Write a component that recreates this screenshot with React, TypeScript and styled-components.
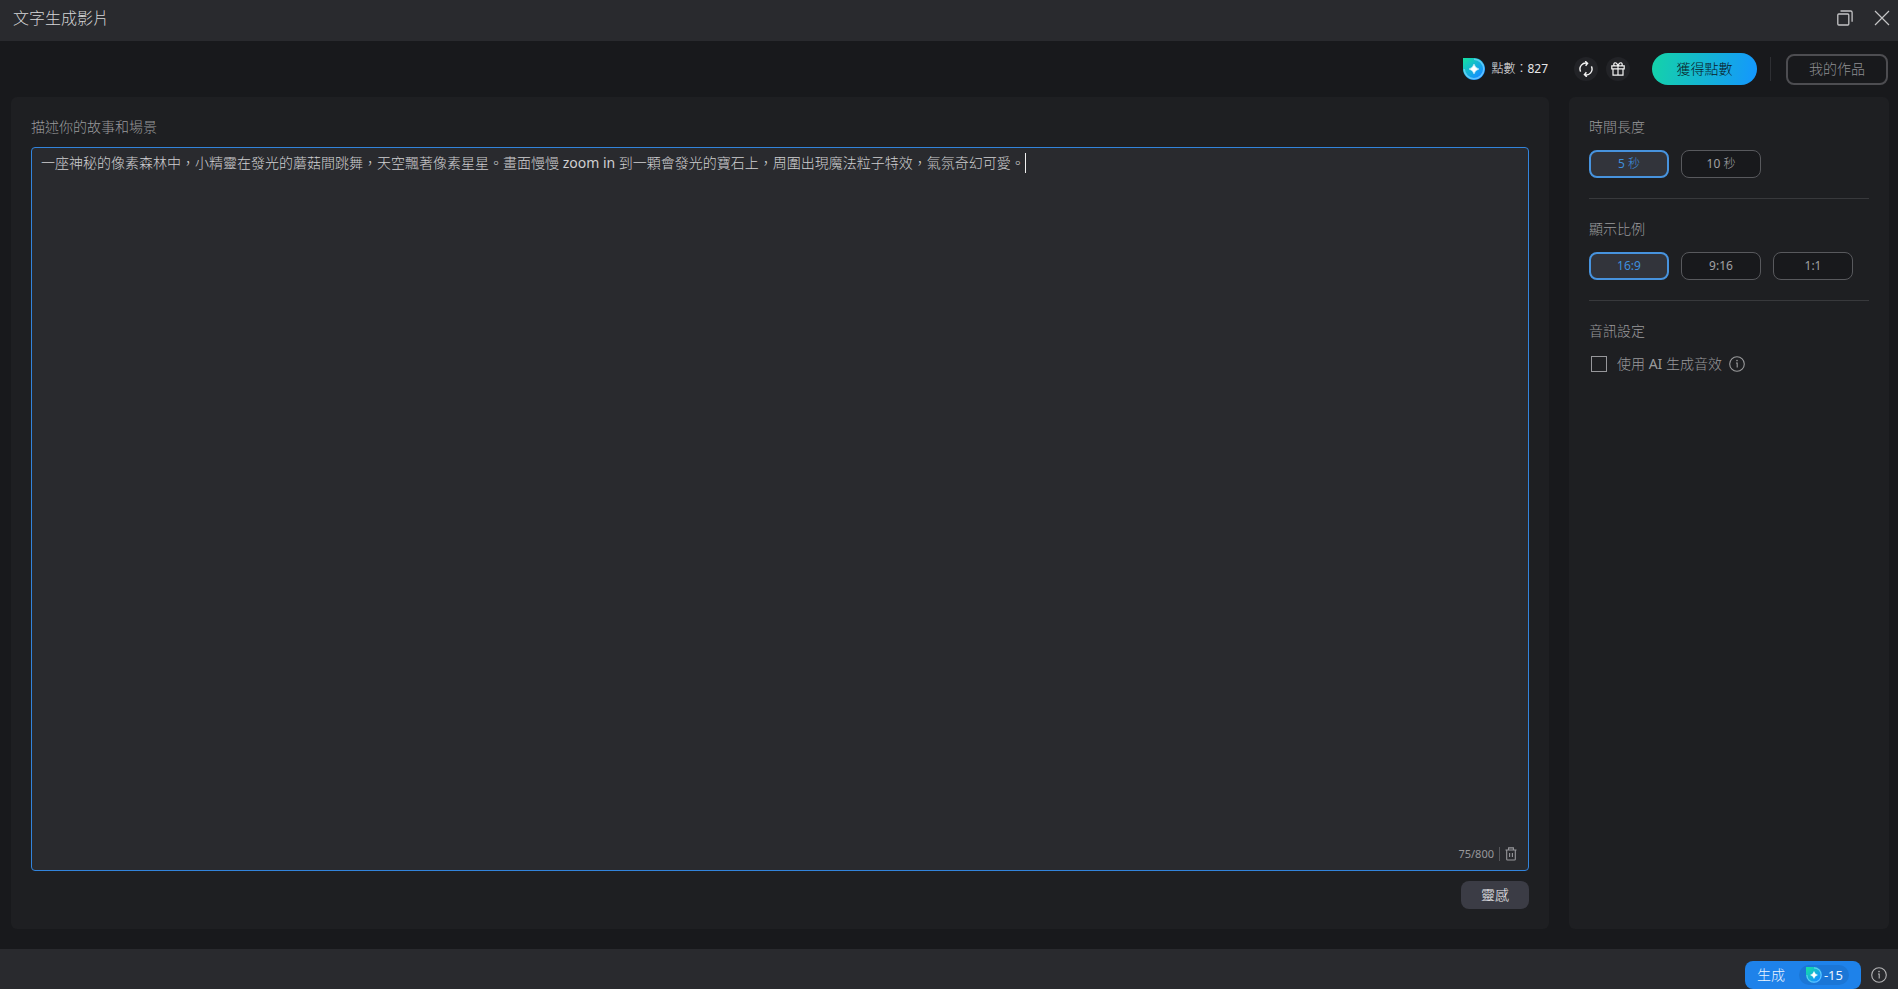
import React, { useRef, useState } from "react";
import styled, { createGlobalStyle, css } from "styled-components";

const GlobalStyle = createGlobalStyle`
  *, *::before, *::after { box-sizing: border-box; }
  body {
    margin: 0;
    background: #18191c;
    color: #9a9a9c;
    font: 14px/20px "Noto Sans", "Noto Sans CJK TC Light", "Noto Sans CJK TC", sans-serif;
  }
  button, textarea, input { font: inherit; color: inherit; }
  button { cursor: pointer; padding: 0; border: 0; background: none; }
  svg { display: block; flex: none; }
`;

const Page = styled.div`
  min-height: 100vh;
  display: flex;
  flex-direction: column;
`;

const TitleBar = styled.header`
  height: 41px;
  padding: 0 8px 6px 13px;
  display: flex;
  align-items: center;
  justify-content: space-between;
  background: #292a2e;
`;

const Title = styled.h1`
  margin: 0;
  font-size: 16px;
  line-height: 24px;
  font-weight: 400;
  color: #d6d6d8;
`;

const WindowControls = styled.div`
  display: flex;
  gap: 21px;
  color: #c4c4c6;
`;

const IconButton = styled.button`
  display: grid;
  place-items: center;
  color: inherit;
`;

const Toolbar = styled.div`
  height: 56px;
  padding: 0 10px 0 0;
  display: flex;
  align-items: center;
  justify-content: flex-end;
`;

const Points = styled.div`
  display: flex;
  align-items: center;
  gap: 6px;
  margin-right: 26px;
  font-size: 12px;
  color: #e6e6e8;
`;

const RoundButton = styled(IconButton)`
  width: 24px;
  height: 24px;
  margin-right: 8px;
  border-radius: 50%;
  background: #222327;
  color: #f4f4f4;
`;

const GetPoints = styled.button`
  width: 105px;
  height: 32px;
  margin-left: 14px;
  border-radius: 16px;
  background: linear-gradient(100deg, #14d3a8, #1496ff);
  color: #0a1a26;
`;

const ToolbarRule = styled.span`
  width: 1px;
  height: 24px;
  margin: 0 15px 0 13px;
  background: #2e2f33;
`;

const WorksButton = styled.button`
  width: 102px;
  height: 31px;
  border: 2px solid #4d4d51;
  border-radius: 8px;
  color: #8e8e92;
`;

const Content = styled.main`
  flex: 1;
  display: flex;
  gap: 20px;
  padding: 0 9px 20px 11px;
`;

const Panel = styled.section`
  display: flex;
  flex-direction: column;
  padding: 20px;
  border-radius: 6px;
  background: #1e1f22;
`;

const PromptPanel = styled(Panel)`
  flex: 1;
  min-width: 0;
`;

const SettingsPanel = styled(Panel)`
  width: 320px;
`;

const labelText = css`
  display: block;
  margin: 0;
  padding: 0;
  font-size: 14px;
  line-height: 20px;
  color: #9a9a9c;
`;

const FieldLabel = styled.label`
  ${labelText}
  margin-bottom: 10px;
`;

const PromptBox = styled.div`
  flex: 1;
  display: flex;
  flex-direction: column;
  border: 1px solid #3284dc;
  border-radius: 4px;
  background: #292a2e;
  cursor: text;
`;

const PromptLine = styled.div`
  flex: 1;
  display: flex;
  align-items: flex-start;
  padding: 5px 9px;
`;

const PromptInput = styled.textarea`
  field-sizing: content;
  max-width: 100%;
  min-height: 20px;
  padding: 0;
  border: 0;
  outline: 0;
  resize: none;
  overflow: hidden;
  background: transparent;
  color: #cfcfd1;
  line-height: 20px;
  caret-color: transparent;
`;

const Caret = styled.span`
  width: 1px;
  height: 20px;
  background: #f0f0f0;
`;

const PromptFooter = styled.div`
  display: flex;
  align-items: center;
  justify-content: flex-end;
  gap: 5px;
  padding: 0 11px 6px;
  font-size: 11px;
  color: #97979b;
`;

const CountRule = styled.span`
  width: 1px;
  height: 14px;
  background: #55565a;
`;

const InspireButton = styled.button`
  align-self: flex-end;
  width: 68px;
  height: 28px;
  margin-top: 10px;
  border-radius: 8px;
  background: #3b3c45;
  color: #f0f0f2;
`;

const Group = styled.fieldset`
  min-width: 0;
  margin: 0 0 20px;
  padding: 0 0 20px;
  border: 0;
  border-bottom: 1px solid #38393c;

  &:last-child { border-bottom-color: transparent; }
`;

const GroupTitle = styled.legend`
  ${labelText}
  margin-bottom: 13px;
`;

const Options = styled.div`
  display: flex;
  gap: 12px;
`;

const Option = styled.button<{ $active: boolean }>`
  width: 80px;
  height: 28px;
  border: ${(p) => (p.$active ? "2px solid #4793de" : "1px solid #58595d")};
  border-radius: 8px;
  background: ${(p) => (p.$active ? "#32343b" : "#18191c")};
  color: ${(p) => (p.$active ? "#3f8fdd" : "#a0a0a4")};
  font-size: 12px;
  line-height: 20px;
`;

const CheckRow = styled.div`
  display: flex;
  align-items: center;
  gap: 7px;
  margin-left: 2px;
`;

const CheckLabel = styled.label`
  display: flex;
  align-items: center;
  gap: 10px;
`;

const Checkbox = styled.input`
  appearance: none;
  width: 16px;
  height: 16px;
  margin: 0;
  border: 1px solid #97979b;

  &:checked { background: #3f8fdd; }
`;

const Footer = styled.footer`
  height: 40px;
  padding: 12px 11px 0;
  display: flex;
  align-items: center;
  justify-content: flex-end;
  gap: 10px;
  background: #292a2e;
  color: #b4b4b6;
`;

const GenerateButton = styled.button`
  display: flex;
  align-items: center;
  justify-content: space-between;
  width: 116px;
  height: 28px;
  padding: 0 12px;
  border-radius: 8px;
  background: #1e82ea;
  color: #eaf4ff;
  white-space: nowrap;
`;

const Cost = styled.span`
  display: flex;
  align-items: center;
  gap: 2px;
  height: 20px;
  padding: 0 6px 0 7px;
  border-radius: 10px;
  background: #1b76d6;
  font-size: 13px;
`;

function PointsIcon({ size, id }: { size: number; id: string }) {
  return (
    <svg width={size} height={size} viewBox="0 0 22 22" aria-hidden="true">
      <defs>
        <linearGradient id={id} x1="0" y1="0" x2="0.75" y2="0.8">
          <stop offset="0.1" stopColor="#14dca8" />
          <stop offset="1" stopColor="#1490ff" />
        </linearGradient>
      </defs>
      <path d="M0 0h11a11 11 0 1 1-11 11z" fill={`url(#${id})`} />
      <path d="M11 1.2a9.8 9.8 0 1 1-9.8 9.8" fill="none" stroke="#7ed4ff" strokeOpacity="0.7" strokeWidth="1.6" />
      <path d="M11 6.2q1 3.8 4.8 4.8q-3.8 1-4.8 4.8q-1-3.8-4.8-4.8q3.8-1 4.8-4.8z" fill="#fff" stroke="#fff" strokeWidth="0.6" />
    </svg>
  );
}

const RefreshIcon = () => (
  <svg width="16" height="16" viewBox="0 0 16 16" fill="none" stroke="currentColor" strokeWidth="1.4" aria-hidden="true">
    <path d="M2.6 10.6A6 6 0 0 1 9.6 2.2M7.2 0.2L9.6 2.3L7.6 4.8" />
    <path d="M13.4 5.4A6 6 0 0 1 6.4 13.8M8.8 15.8L6.4 13.7L8.4 11.2" />
  </svg>
);

const GiftIcon = () => (
  <svg width="14" height="14" viewBox="0 0 14 14" fill="none" stroke="currentColor" strokeWidth="1.2" aria-hidden="true">
    <path d="M0.8 3.8h12.4v3H0.8zM2 6.8v6.4h10V6.8M7 3.8v9.4M7 3.8C6 1 4.6 0.6 3.8 0.8C2.4 1.2 2.6 3 3.4 3.8M7 3.8C8 1 9.4 0.6 10.2 0.8C11.6 1.2 11.4 3 10.6 3.8" />
  </svg>
);

const RestoreIcon = () => (
  <svg width="16" height="16" viewBox="0 0 16 16" fill="none" stroke="currentColor" strokeWidth="1.3" aria-hidden="true">
    <rect x="0.8" y="4" width="11" height="11" rx="1" />
    <path d="M3.5 1h10.2a1.4 1.4 0 0 1 1.4 1.4v9.4" />
  </svg>
);

const CloseIcon = () => (
  <svg width="16" height="16" viewBox="0 0 16 16" fill="none" stroke="currentColor" strokeWidth="1.2" aria-hidden="true">
    <path d="M1 1l14 14M15 1L1 15" />
  </svg>
);

const InfoIcon = () => (
  <svg width="16" height="16" viewBox="0 0 16 16" fill="none" stroke="currentColor" strokeWidth="1.1" aria-hidden="true">
    <circle cx="8" cy="8" r="7.3" />
    <path d="M7 7h1.2v4.5" />
    <circle cx="8" cy="4.6" r="0.8" fill="currentColor" stroke="none" />
  </svg>
);

const TrashIcon = () => (
  <svg width="12" height="14" viewBox="0 0 12 14" fill="none" stroke="currentColor" strokeWidth="1.1" aria-hidden="true">
    <path d="M0.5 3h11M3.6 3V0.9h4.8V3M1.7 3v9.2q0 0.8 0.8 0.8h7q0.8 0 0.8-0.8V3M4.6 6v4M7.4 6v4" />
  </svg>
);

const DURATIONS = ["5 秒", "10 秒"];
const RATIOS = ["16:9", "9:16", "1:1"];
const LIMIT = 800;
const INITIAL_PROMPT =
  "一座神秘的像素森林中，小精靈在發光的蘑菇間跳舞，天空飄著像素星星。畫面慢慢 zoom in 到一顆會發光的寶石上，周圍出現魔法粒子特效，氣氛奇幻可愛。";

interface ChoiceProps {
  title: string;
  items: string[];
  value: string;
  onChange: (value: string) => void;
}

function ChoiceGroup({ title, items, value, onChange }: ChoiceProps) {
  return (
    <Group>
      <GroupTitle>{title}</GroupTitle>
      <Options>
        {items.map((item) => (
          <Option key={item} type="button" $active={item === value} aria-pressed={item === value} onClick={() => onChange(item)}>
            {item}
          </Option>
        ))}
      </Options>
    </Group>
  );
}

export default function App() {
  const [prompt, setPrompt] = useState(INITIAL_PROMPT);
  const [duration, setDuration] = useState(DURATIONS[0]);
  const [ratio, setRatio] = useState(RATIOS[0]);
  const [audio, setAudio] = useState(false);
  const input = useRef<HTMLTextAreaElement>(null);

  return (
    <>
      <GlobalStyle />
      <Page>
        <TitleBar>
          <Title>文字生成影片</Title>
          <WindowControls>
            <IconButton type="button" aria-label="還原"><RestoreIcon /></IconButton>
            <IconButton type="button" aria-label="關閉"><CloseIcon /></IconButton>
          </WindowControls>
        </TitleBar>
        <Toolbar>
          <Points>
            <PointsIcon size={22} id="points-balance" />
            點數：827
          </Points>
          <RoundButton type="button" aria-label="重新整理"><RefreshIcon /></RoundButton>
          <RoundButton type="button" aria-label="禮物"><GiftIcon /></RoundButton>
          <GetPoints type="button">獲得點數</GetPoints>
          <ToolbarRule />
          <WorksButton type="button">我的作品</WorksButton>
        </Toolbar>
        <Content>
          <PromptPanel>
            <FieldLabel htmlFor="prompt">描述你的故事和場景</FieldLabel>
            <PromptBox onClick={() => input.current?.focus()}>
              <PromptLine>
                <PromptInput
                  id="prompt"
                  ref={input}
                  rows={1}
                  maxLength={LIMIT}
                  value={prompt}
                  onChange={(e) => setPrompt(e.target.value)}
                />
                <Caret />
              </PromptLine>
              <PromptFooter>
                <span>{prompt.length}/{LIMIT}</span>
                <CountRule />
                <IconButton type="button" aria-label="清除" onClick={() => setPrompt("")}><TrashIcon /></IconButton>
              </PromptFooter>
            </PromptBox>
            <InspireButton type="button">靈感</InspireButton>
          </PromptPanel>
          <SettingsPanel>
            <ChoiceGroup title="時間長度" items={DURATIONS} value={duration} onChange={setDuration} />
            <ChoiceGroup title="顯示比例" items={RATIOS} value={ratio} onChange={setRatio} />
            <Group>
              <GroupTitle>音訊設定</GroupTitle>
              <CheckRow>
                <CheckLabel>
                  <Checkbox type="checkbox" checked={audio} onChange={(e) => setAudio(e.target.checked)} />
                  使用 AI 生成音效
                </CheckLabel>
                <IconButton type="button" aria-label="音效說明"><InfoIcon /></IconButton>
              </CheckRow>
            </Group>
          </SettingsPanel>
        </Content>
        <Footer>
          <GenerateButton type="button">
            生成
            <Cost>
              <PointsIcon size={16} id="points-cost" />
              -15
            </Cost>
          </GenerateButton>
          <IconButton type="button" aria-label="點數說明"><InfoIcon /></IconButton>
        </Footer>
      </Page>
    </>
  );
}
